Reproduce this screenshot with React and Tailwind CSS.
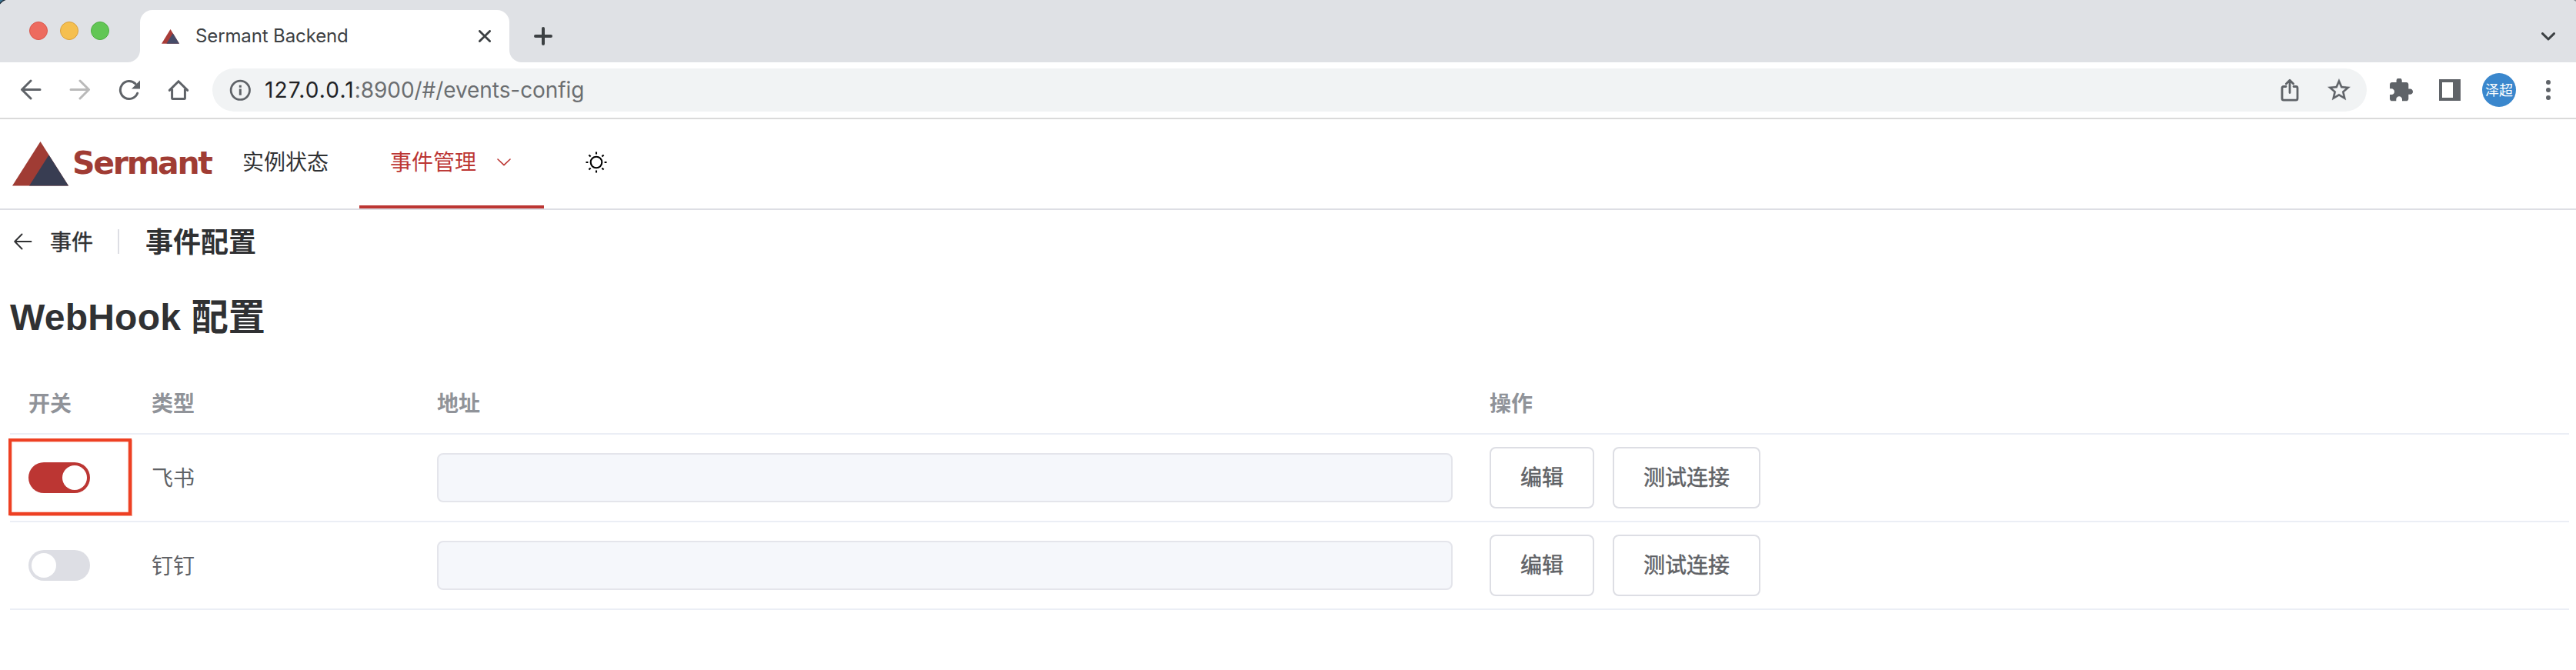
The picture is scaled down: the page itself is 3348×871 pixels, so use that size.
import React from "react";

const UI = "font-['Inter',sans-serif]";
const MEDIUM = "[-webkit-text-stroke:0.5px_currentColor]";
const strokeProps = { fill: "none", strokeLinecap: "round", strokeLinejoin: "round" };

function TabStrip() {
  return (
    <div className="relative flex h-[81px] items-end bg-[#dfe1e5]">
      <svg className="absolute left-0 top-0" width="8" height="6" viewBox="0 0 8 6">
        <path d="M0 0H7.5Q3 1.5 0 5.5Z" fill="#1d2b38" />
        <path d="M0 0H4L0 3.6Z" fill="#3f7796" />
      </svg>
      <svg className="absolute right-0 top-0" width="3" height="2" viewBox="0 0 3 2">
        <path d="M0 0H3V2Z" fill="#8d9096" />
      </svg>
      <div className="mb-[29px] ml-[38px] flex w-[128px] gap-4">
        <span className="size-6 rounded-full border border-[#d9574c] bg-[#ed6b5f]" />
        <span className="size-6 rounded-full border border-[#d9a03c] bg-[#f5bf4f]" />
        <span className="size-6 rounded-full border border-[#4fae43] bg-[#62c655]" />
      </div>
      <svg width="16" height="16" viewBox="0 0 16 16">
        <path d="M16 0V16H0A16 16 0 0 0 16 0Z" fill="#fff" />
      </svg>
      <div className="flex h-[68px] w-[480px] items-center rounded-t-[16px] bg-white pl-[28px] pr-[24px]">
        <svg width="23" height="19" viewBox="0 0 23 19">
          <path d="M11.5 0L23 18.8H0Z" fill="#a93c38" />
          <path d="M14.7 5.2L23 18.8H6.4Z" fill="#464b68" />
        </svg>
        <span className={`${UI} ml-[21px] whitespace-nowrap text-[24px] leading-[32px] tracking-[-0.12px] text-[#3c4043]`}>
          Sermant Backend
        </span>
        <svg className="ml-auto" width="16" height="16" viewBox="0 0 16 16">
          <path d="M1.4 1.4L14.6 14.6M14.6 1.4L1.4 14.6" stroke="#3c4043" strokeWidth="2.8" {...strokeProps} />
        </svg>
      </div>
      <svg width="16" height="16" viewBox="0 0 16 16">
        <path d="M0 0V16H16A16 16 0 0 1 0 0Z" fill="#fff" />
      </svg>
      <svg className="mb-[22px] ml-[16px]" width="24" height="24" viewBox="0 0 24 24">
        <path d="M12 2V22M2 12H22" stroke="#3c4043" strokeWidth="4" {...strokeProps} />
      </svg>
      <svg className="mb-[28px] ml-auto mr-[27px]" width="18" height="11" viewBox="0 0 18 11">
        <path d="M1.5 1.6L9 9L16.5 1.6" stroke="#3c4043" strokeWidth="3" {...strokeProps} />
      </svg>
    </div>
  );
}

function Toolbar() {
  return (
    <div className="flex h-[74px] items-center border-b-2 border-[#dadada] bg-white">
      <div className="ml-[26px] flex items-center gap-9">
        <svg width="28" height="28" viewBox="0 0 28 28">
          <path d="M26 13.5H2.5M14 2L2.5 13.5L14 25" stroke="#5f6368" strokeWidth="3" {...strokeProps} />
        </svg>
        <svg width="28" height="28" viewBox="0 0 28 28">
          <path d="M2 13.5H25.5M14 2L25.5 13.5L14 25" stroke="#bababa" strokeWidth="3" {...strokeProps} />
        </svg>
        <svg width="28" height="28" viewBox="0 0 28 28">
          <path d="M24.6 18.2A11.5 11.5 0 1 1 22 5.9" stroke="#5f6368" strokeWidth="3" {...strokeProps} />
          <path d="M28 1.5V12.5H17Z" fill="#5f6368" />
        </svg>
        <svg width="28" height="28" viewBox="0 0 28 28">
          <path d="M2.3 14.4L14 2.8L25.7 14.4" stroke="#5f6368" strokeWidth="3" fill="none" strokeLinecap="round" />
          <path d="M5.6 12.5V24.5Q5.6 25.5 6.6 25.5H21.4Q22.4 25.5 22.4 24.5V12.5" stroke="#5f6368" strokeWidth="3" fill="none" />
        </svg>
      </div>
      <div className="ml-[30px] flex h-14 w-[2800px] items-center rounded-full bg-[#f1f3f4] pl-[22px] pr-[21px]">
        <svg width="28" height="28" viewBox="0 0 28 28">
          <circle cx="14.3" cy="14.3" r="12.2" fill="none" stroke="#5f6368" strokeWidth="2.7" />
          <path d="M12.8 7.8H15.8V10.8H12.8ZM12.8 12.6H15.8V20.8H12.8Z" fill="#5f6368" />
        </svg>
        <span className={`${UI} ml-[18px] whitespace-nowrap text-[28px] leading-[36px] tracking-[-0.07px] text-[#6b6e71]`}>
          <span className="tracking-[1.15px] text-[#202124]">127.0.0.1</span>:8900/#/events-config
        </span>
        <svg className="ml-auto" width="24" height="30" viewBox="0 0 24 30">
          <path
            d="M7 10.5H4Q2 10.5 2 12.5V26Q2 28.2 4 28.2H20Q22 28.2 22 26V12.5Q22 10.5 20 10.5H17M12 18.5V2.5M7.3 7L12 2.3L16.7 7"
            stroke="#5f6368"
            strokeWidth="2.8"
            {...strokeProps}
          />
        </svg>
        <svg className="ml-[37px]" width="30" height="30" viewBox="0 0 24 24">
          <path
            d="M22 9.24l-7.19-.62L12 2 9.19 8.63 2 9.24l5.46 4.73L5.82 21 12 17.27 18.18 21l-1.63-7.03L22 9.24zM12 15.4l-3.76 2.27 1-4.28-3.32-2.88 4.38-.38L12 6.1l1.71 4.04 4.38.38-3.32 2.88 1 4.28L12 15.4z"
            fill="#5f6368"
            stroke="#5f6368"
            strokeWidth="0.2"
            transform="translate(-2 -2) scale(1.165)"
          />
        </svg>
      </div>
      <svg className="ml-[30px]" width="30" height="30" viewBox="2 1.5 21 21">
        <path
          d="M20.5 11H19V7c0-1.1-.9-2-2-2h-4V3.5C13 2.12 11.88 1 10.5 1S8 2.12 8 3.5V5H4c-1.1 0-1.99.9-1.99 2v3.8H3.5c1.49 0 2.7 1.21 2.7 2.7s-1.21 2.7-2.7 2.7H2V20c0 1.1.9 2 2 2h3.8v-1.5c0-1.49 1.21-2.7 2.7-2.7 1.49 0 2.7 1.21 2.7 2.7V22H17c1.1 0 2-.9 2-2v-4h1.5c1.38 0 2.5-1.12 2.5-2.5S21.88 11 20.5 11z"
          fill="#5f6368"
        />
      </svg>
      <svg className="ml-[34px]" width="28" height="28" viewBox="0 0 28 28">
        <path d="M0 0H28V28H0ZM4 4V24H18V4Z" fill="#5f6368" fillRule="evenodd" />
      </svg>
      <div className="ml-7 flex size-11 items-center justify-center rounded-full bg-[#3a87cd] pb-[2px] font-['Noto_Sans_CJK_SC',sans-serif] text-[18px] leading-none text-white">
        泽超
      </div>
      <svg className="ml-[39px]" width="6" height="26" viewBox="0 0 6 26">
        <circle cx="3" cy="3" r="3" fill="#5f6368" />
        <circle cx="3" cy="13" r="3" fill="#5f6368" />
        <circle cx="3" cy="23" r="3" fill="#5f6368" />
      </svg>
    </div>
  );
}

function SiteNav() {
  return (
    <nav className="flex h-[118px] border-b-2 border-[#dddee4] text-[28px] leading-[40px]">
      <div className="ml-4 flex items-center">
        <svg width="73" height="58" viewBox="0 0 73 58">
          <path d="M36.5 0L73 57.6H0Z" fill="#a03c34" />
          <path d="M47.5 17.4L73 57.6H22Z" fill="#383d52" />
        </svg>
        <span className="ml-[5px] w-[181px] whitespace-nowrap pb-[2px] font-['DejaVu_Sans',sans-serif] text-[41px] font-bold leading-[48px] tracking-[-2.3px] text-[#a03c34]">
          Sermant
        </span>
      </div>
      <span className="ml-[40px] flex h-[111px] w-[112px] items-center pt-[3px] text-[#303133]">实例状态</span>
      <div className="ml-[40px] flex w-[240px] flex-col border-b-4 border-[#bc3633] pl-10 text-[#bc3633]">
        <div className="flex h-[111px] items-center">
          <span className="pt-[3px]">事件管理</span>
          <svg className="ml-[27px]" width="18" height="10" viewBox="0 0 18 10">
            <path d="M1 1L9 8.7L17 1" stroke="#bc3633" strokeWidth="1.6" {...strokeProps} />
          </svg>
        </div>
      </div>
      <div className="ml-[54px] flex h-[112px] items-center">
        <svg width="28" height="28" viewBox="0 0 28 28">
          <circle cx="14" cy="14" r="7.3" fill="none" stroke="#000" strokeWidth="2.1" />
          <path
            d="M14 .5V3.4M14 24.6V27.5M.5 14H3.4M24.6 14H27.5M4.4 4.4L6.6 6.6M21.4 21.4L23.6 23.6M4.4 23.6L6.6 21.4M21.4 6.6L23.6 4.4"
            stroke="#000"
            strokeWidth="2.1"
          />
        </svg>
      </div>
    </nav>
  );
}

function PageHeader() {
  return (
    <div className="flex h-[82px] items-center pl-[18px] text-[#303133]">
      <svg width="24" height="22" viewBox="0 0 24 22">
        <path d="M22.5 11H1.5M10.5 1.5L1.2 11L10.5 20.5" stroke="#303133" strokeWidth="1.9" {...strokeProps} />
      </svg>
      <span className={`${MEDIUM} ml-[23px] pt-[3px] text-[28px] leading-[40px]`}>事件</span>
      <span className="ml-8 h-8 w-0.5 bg-[#dddee4]" />
      <span className="ml-[34px] pt-[3px] text-[36px] font-bold leading-[48px]">事件配置</span>
    </div>
  );
}

const COLUMNS = "grid grid-cols-[160px_371px_1368px_1fr] items-center border-b-2 border-[#ebeef5]";

function Switch({ on }) {
  return (
    <span className={`flex h-10 w-20 rounded-full p-1 ${on ? "justify-end bg-[#bc3633]" : "bg-[#dddee4]"}`}>
      <span className="size-8 rounded-full bg-white" />
    </span>
  );
}

function Button({ children }) {
  return (
    <button className={`${MEDIUM} h-20 rounded-[8px] border-2 border-[#dddee4] bg-white px-[38px] pt-[2px] text-[28px] leading-none text-[#606266]`}>
      {children}
    </button>
  );
}

function ConfigRow({ name, on, marked }) {
  return (
    <div className={`${COLUMNS} h-[114px]`}>
      <div className="relative pl-6">
        <Switch on={on} />
        {marked && (
          <span className="absolute -left-[2px] -top-[31px] h-[100px] w-[160px] border-4 border-[#ee4023] shadow-[0_0_1px_0.5px_#f4a999,inset_0_0_1px_0.5px_#f4a999]" />
        )}
      </div>
      <div className="pl-6 pt-[3px] text-[#606266]">{name}</div>
      <div className="px-6">
        <div className="h-16 rounded-[8px] border-2 border-[#e4e5eb] bg-[#f5f7fb]" />
      </div>
      <div className="flex gap-6 pl-6">
        <Button>编辑</Button>
        <Button>测试连接</Button>
      </div>
    </div>
  );
}

export default function App() {
  return (
    <div className="h-[871px] w-[3348px] overflow-hidden bg-white font-['Liberation_Sans','Noto_Sans_CJK_SC',sans-serif]">
      <TabStrip />
      <Toolbar />
      <SiteNav />
      <PageHeader />
      <main className="pl-[13px] pr-[9px]">
        <h2 className="mt-[30px] h-[56px] whitespace-nowrap text-[48px] font-bold leading-[56px] text-[#303133]">
          <span className="tracking-[0.25px]">WebHook </span>配置
        </h2>
        <div className="mt-[44px] text-[28px] leading-[40px]">
          <div className={`${COLUMNS} h-[80px] pt-[3px] font-bold text-[#909399]`}>
            <span className="pl-6">开关</span>
            <span className="pl-6">类型</span>
            <span className="pl-6">地址</span>
            <span className="pl-6">操作</span>
          </div>
          <ConfigRow name="飞书" on marked />
          <ConfigRow name="钉钉" on={false} />
        </div>
      </main>
    </div>
  );
}
